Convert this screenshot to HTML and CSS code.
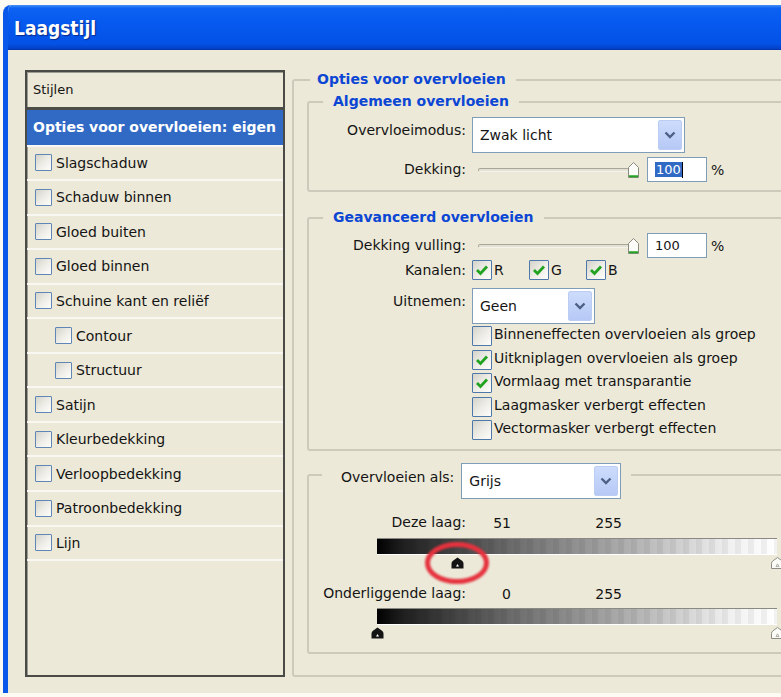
FILE: index.html
```html
<!DOCTYPE html>
<html lang="nl">
<head>
<meta charset="utf-8">
<title>Laagstijl</title>
<link rel="stylesheet" href="styles.css">
</head>
<body>
<div class="window">
  <div class="titlebar"><span class="title">Laagstijl</span></div>
  <div class="content">
    <div class="styles-list">
      <div class="list-head">Stijlen</div>
      <div class="list-item selected">Opties voor overvloeien: eigen</div>
      <div class="list-item"><span class="cb"></span>Slagschaduw</div>
      <div class="list-item"><span class="cb"></span>Schaduw binnen</div>
      <div class="list-item"><span class="cb"></span>Gloed buiten</div>
      <div class="list-item"><span class="cb"></span>Gloed binnen</div>
      <div class="list-item"><span class="cb"></span>Schuine kant en reliëf</div>
      <div class="list-item sub"><span class="cb"></span>Contour</div>
      <div class="list-item sub"><span class="cb"></span>Structuur</div>
      <div class="list-item"><span class="cb"></span>Satijn</div>
      <div class="list-item"><span class="cb"></span>Kleurbedekking</div>
      <div class="list-item"><span class="cb"></span>Verloopbedekking</div>
      <div class="list-item"><span class="cb"></span>Patroonbedekking</div>
      <div class="list-item"><span class="cb"></span>Lijn</div>
    </div>

    <fieldset class="group outer">
      <legend>Opties voor overvloeien</legend>

      <fieldset class="group general">
        <legend>Algemeen overvloeien</legend>
        <div class="row top">
          <span class="lbl">Overvloeimodus:</span>
          <div class="select w-mode">
            <span class="sel-text">Zwak licht</span>
            <span class="sel-btn"><svg width="12" height="8" viewBox="0 0 12 8"><path d="M1.5 1.5 L6 6 L10.5 1.5" fill="none" stroke="#4d6185" stroke-width="2.4"/></svg></span>
          </div>
        </div>
        <div class="row gap4">
          <span class="lbl">Dekking:</span>
          <div class="slider">
            <span class="track"></span>
            <svg class="knob" width="11" height="16" viewBox="0 0 11 16"><path d="M0.5 15.5 V5.5 L5.5 0.5 L10.5 5.5 V15.5 Z" fill="#fbfbf7" stroke="#8a8a7e"/><path d="M1 14.2 H10" stroke="#25a325" stroke-width="2"/></svg>
          </div>
          <span class="num"><span class="hl">100</span><span class="caret"></span></span>
          <span class="pct">%</span>
        </div>
      </fieldset>

      <fieldset class="group advanced">
        <legend>Geavanceerd overvloeien</legend>
        <div class="row">
          <span class="lbl">Dekking vulling:</span>
          <div class="slider">
            <span class="track"></span>
            <svg class="knob" width="11" height="16" viewBox="0 0 11 16"><path d="M0.5 15.5 V5.5 L5.5 0.5 L10.5 5.5 V15.5 Z" fill="#fbfbf7" stroke="#8a8a7e"/><path d="M1 14.2 H10" stroke="#25a325" stroke-width="2"/></svg>
          </div>
          <span class="num">100</span>
          <span class="pct">%</span>
        </div>
        <div class="row channels">
          <span class="lbl">Kanalen:</span>
          <span class="chan"><span class="cb lg on"><svg width="18" height="18" viewBox="0 0 18 18"><path d="M4 9 L7.5 12.5 L14 5.5" fill="none" stroke="#21a321" stroke-width="2.8"/></svg></span>R</span>
          <span class="chan"><span class="cb lg on"><svg width="18" height="18" viewBox="0 0 18 18"><path d="M4 9 L7.5 12.5 L14 5.5" fill="none" stroke="#21a321" stroke-width="2.8"/></svg></span>G</span>
          <span class="chan"><span class="cb lg on"><svg width="18" height="18" viewBox="0 0 18 18"><path d="M4 9 L7.5 12.5 L14 5.5" fill="none" stroke="#21a321" stroke-width="2.8"/></svg></span>B</span>
        </div>
        <div class="row top knockout">
          <span class="lbl">Uitnemen:</span>
          <div class="select w-knock">
            <span class="sel-text">Geen</span>
            <span class="sel-btn"><svg width="12" height="8" viewBox="0 0 12 8"><path d="M1.5 1.5 L6 6 L10.5 1.5" fill="none" stroke="#4d6185" stroke-width="2.4"/></svg></span>
          </div>
        </div>
        <div class="row checks">
          <span class="lbl"></span>
          <div class="check-list">
            <div class="check"><span class="cb lg"></span>Binneneffecten overvloeien als groep</div>
            <div class="check"><span class="cb lg on"><svg width="18" height="18" viewBox="0 0 18 18"><path d="M4 9 L7.5 12.5 L14 5.5" fill="none" stroke="#21a321" stroke-width="2.8"/></svg></span>Uitkniplagen overvloeien als groep</div>
            <div class="check"><span class="cb lg on"><svg width="18" height="18" viewBox="0 0 18 18"><path d="M4 9 L7.5 12.5 L14 5.5" fill="none" stroke="#21a321" stroke-width="2.8"/></svg></span>Vormlaag met transparantie</div>
            <div class="check"><span class="cb lg"></span>Laagmasker verbergt effecten</div>
            <div class="check"><span class="cb lg"></span>Vectormasker verbergt effecten</div>
          </div>
        </div>
      </fieldset>

      <fieldset class="group blendif">
        <legend class="blend-legend">
          <span class="legend-lbl">Overvloeien als:</span>
          <div class="select w-blend">
            <span class="sel-text">Grijs</span>
            <span class="sel-btn"><svg width="12" height="8" viewBox="0 0 12 8"><path d="M1.5 1.5 L6 6 L10.5 1.5" fill="none" stroke="#4d6185" stroke-width="2.4"/></svg></span>
          </div>
        </legend>

        <div class="row vals">
          <span class="lbl">Deze laag:</span>
          <span class="v1">51</span>
          <span class="v2">255</span>
        </div>
        <div class="ramp">
          <span class="bar"></span>
          <svg class="mark" style="left:20%" width="13" height="12" viewBox="0 0 13 12"><path d="M0.5 11.5 V6.5 Q0.5 4.8 2 3.8 L6.5 0.5 L11 3.8 Q12.5 4.8 12.5 6.5 V11.5 Z" fill="#141414"/><path d="M5 9.6 L6.5 6.9 L8 9.6 Z" fill="#fff"/></svg>
          <svg class="mark" style="left:100%" width="13" height="12" viewBox="0 0 13 12"><path d="M0.5 11.5 V6.5 Q0.5 4.8 2 3.8 L6.5 0.5 L11 3.8 Q12.5 4.8 12.5 6.5 V11.5 Z" fill="#fbfbf8" stroke="#8d8d85"/><path d="M5 9.6 L6.5 6.9 L8 9.6 Z" fill="none" stroke="#9a9a92" stroke-width="0.8"/></svg>
          <svg class="ring" style="left:20%" width="80" height="50" viewBox="0 0 80 50"><ellipse cx="40" cy="25" rx="29.5" ry="18.5" fill="none" stroke="#e5323e" stroke-width="5"/></svg>
        </div>

        <div class="row vals below">
          <span class="lbl">Onderliggende laag:</span>
          <span class="v1">0</span>
          <span class="v2">255</span>
        </div>
        <div class="ramp second">
          <span class="bar"></span>
          <svg class="mark" style="left:0%" width="13" height="12" viewBox="0 0 13 12"><path d="M0.5 11.5 V6.5 Q0.5 4.8 2 3.8 L6.5 0.5 L11 3.8 Q12.5 4.8 12.5 6.5 V11.5 Z" fill="#141414"/><path d="M5 9.6 L6.5 6.9 L8 9.6 Z" fill="#fff"/></svg>
          <svg class="mark" style="left:100%" width="13" height="12" viewBox="0 0 13 12"><path d="M0.5 11.5 V6.5 Q0.5 4.8 2 3.8 L6.5 0.5 L11 3.8 Q12.5 4.8 12.5 6.5 V11.5 Z" fill="#fbfbf8" stroke="#8d8d85"/><path d="M5 9.6 L6.5 6.9 L8 9.6 Z" fill="none" stroke="#9a9a92" stroke-width="0.8"/></svg>
        </div>
      </fieldset>
    </fieldset>
  </div>
</div>
</body>
</html>
```

FILE: styles.css
```css
* {
  box-sizing: border-box;
}

html,
body {
  margin: 0;
  overflow: hidden;
}

body {
  background: #fbfaf3;
  font-family: "DejaVu Sans", Verdana, sans-serif;
  font-size: 14px;
  color: #141414;
}

/* Dialog frame */
.window {
  width: 1000px;
  margin: 5px 0 0 3px;
  border-left: 5px solid #0a58ea;
  border-top-left-radius: 8px;
  overflow: hidden;
}

.titlebar {
  height: 45px;
  padding: 12px 0 0 6px;
  background: linear-gradient(#4a92f8 0, #0c62f2 7%, #0658ee 45%, #0452e6 88%, #0340c4 100%);
  border-bottom: 1px solid #0335b0;
}

.title {
  font-family: "DejaVu Sans Condensed", "DejaVu Sans", sans-serif;
  font-stretch: condensed;
  font-weight: bold;
  font-size: 19px;
  line-height: 22px;
  color: #fff;
  text-shadow: 1px 1px 1px #0a2a8a;
}

.content {
  display: flex;
  gap: 7px;
  height: 643px;
  padding: 20px 0 16px 17px;
  background: #ece9d8;
}

/* Styles list on the left */
.styles-list {
  flex: none;
  width: 260px;
  display: flex;
  flex-direction: column;
  border: 2px solid #4a4a46;
  box-shadow: inset 1px 1px 0 #9c9b92;
  background: #ece9d8;
}

.list-head {
  height: 38px;
  padding: 0 6px;
  display: flex;
  align-items: center;
  font-size: 13px;
  border-bottom: 3px solid #4d4d48;
}

.list-item {
  height: 34.55px;
  flex: none;
  display: flex;
  align-items: center;
  gap: 4px;
  padding-left: 8px;
  border-bottom: 2px solid #f8f7f1;
}

.list-item.sub {
  padding-left: 28px;
}

.list-item.selected {
  height: 36.5px;
  padding-left: 6px;
  background: #316ac5;
  background-clip: padding-box;
  color: #fff;
  font-weight: bold;
}

/* Checkboxes */
.cb {
  flex: none;
  width: 17px;
  height: 17px;
  border: 1px solid #5f86b5;
  border-radius: 1px;
  background: linear-gradient(135deg, #d5d4cb 0%, #efeee8 55%, #fdfdfb 100%);
  display: inline-flex;
  align-items: center;
  justify-content: center;
}

.cb.lg {
  width: 20px;
  height: 20px;
  border-color: #4f78aa;
}

/* Group boxes */
.group {
  margin: 0;
  padding: 0;
  min-width: 0;
  border: 2px solid #cdcabb;
  border-radius: 3px;
}

.group > legend {
  color: #0b46d4;
  font-weight: bold;
  font-size: 14px;
  line-height: 17px;
  margin-left: 14px;
  padding: 0 10px;
}

.outer {
  flex: 1;
  margin-top: 1px;
  padding: 5px 0 0 13px;
}

.outer > legend {
  margin-left: 3px;
  padding: 0 10px 0 7px;
}

.general {
  padding: 7px 0 8px;
}

.advanced {
  margin-top: 17px;
  padding: 7px 0 5px;
}

.blendif {
  margin-top: 12.5px;
  padding: 27px 0 13px;
}

/* Label + control rows */
.row {
  display: flex;
  align-items: center;
  gap: 6px;
}

.row.top {
  align-items: flex-start;
}

.row.top .lbl {
  padding-top: 5px;
}

.lbl {
  flex: none;
  width: 157px;
  text-align: right;
  line-height: 17px;
}

.gap4 {
  margin-top: 4px;
}

.channels {
  margin-top: 2px;
  height: 20px;
}

.knockout {
  margin-top: 8px;
}

.checks {
  margin-top: 2px;
  align-items: flex-start;
}

.chan {
  flex: none;
  width: 51px;
  display: flex;
  align-items: center;
  gap: 2px;
}

.chan:first-of-type {
  width: 50px;
}

.check-list {
  display: flex;
  flex-direction: column;
}

.check {
  height: 23.5px;
  display: flex;
  align-items: flex-start;
  gap: 2px;
  white-space: nowrap;
}

/* Drop-down boxes */
.select {
  flex: none;
  height: 36px;
  display: flex;
  padding: 2px;
  background: #fff;
  border: 1px solid #7f9db9;
}

.w-mode {
  width: 213px;
}

.w-knock {
  width: 123px;
}

.w-blend {
  width: 160px;
}

.sel-text {
  flex: 1;
  display: flex;
  align-items: center;
  padding-left: 5px;
  color: #141414;
  font-weight: normal;
}

.sel-btn {
  width: 24px;
  display: flex;
  align-items: center;
  justify-content: center;
  border-radius: 2px;
  background: linear-gradient(#cddcfc, #b6c9f6);
  border: 1px solid #bccdf3;
}

/* Opacity sliders */
.slider {
  flex: none;
  position: relative;
  width: 170px;
  height: 25px;
  display: flex;
  align-items: center;
  padding-left: 6px;
}

.track {
  width: 158px;
  height: 4px;
  border-radius: 2px;
  border: 1px solid #a8a698;
  border-bottom-color: #f4f3ec;
  background: #e3e1d4;
}

.knob {
  position: absolute;
  right: 3px;
  top: 5px;
}

.num {
  flex: none;
  width: 60px;
  height: 25px;
  margin-left: -1px;
  display: flex;
  align-items: center;
  padding-left: 7px;
  font-size: 13px;
  background: #fff;
  border: 1px solid #7f9db9;
}

.hl {
  background: #316ac5;
  color: #fff;
  padding: 0 1px;
}

.caret {
  width: 1px;
  height: 16px;
  background: #000;
}

.pct {
  margin-left: -2px;
}

/* Blend-if section: the legend holds a label and a drop-down */
.group > .blend-legend {
  display: flex;
  align-items: flex-start;
  gap: 7px;
  margin: 0 0 0 13px;
  padding: 0 10px 0 19px;
  color: #141414;
  font-weight: normal;
  font-size: 14px;
}

.blend-legend .select {
  margin-bottom: -12px;
}

.legend-lbl {
  padding-top: 6px;
  line-height: 17px;
}

.vals {
  gap: 0;
  height: 17px;
}

.vals .lbl {
  margin-right: 6px;
}

.v1 {
  width: 39px;
  text-align: right;
}

.v2 {
  width: 111px;
  text-align: right;
}

.vals.below {
  margin-top: 16px;
}

.ramp {
  position: relative;
  width: 400px;
  height: 31px;
  margin: 7px 0 0 68px;
}

.ramp.second {
  margin-top: 6px;
}

.bar {
  display: block;
  height: 17px;
  background:
    repeating-linear-gradient(90deg, rgba(255, 255, 255, 0) 0 7px, rgba(0, 0, 0, 0.05) 7px 13px),
    linear-gradient(90deg, #000 0%, #1e1e1e 6%, #6f6f6f 35%, #b4b4b4 65%, #f0f0f0 88%, #fff 100%);
  border-top: 1px solid #8a8a84;
  border-bottom: 1px solid #fff;
}

.mark {
  position: absolute;
  top: 19px;
  margin-left: -6.5px;
}

.ring {
  position: absolute;
  top: 0;
  margin-left: -40px;
  filter: blur(1.3px);
}
```
